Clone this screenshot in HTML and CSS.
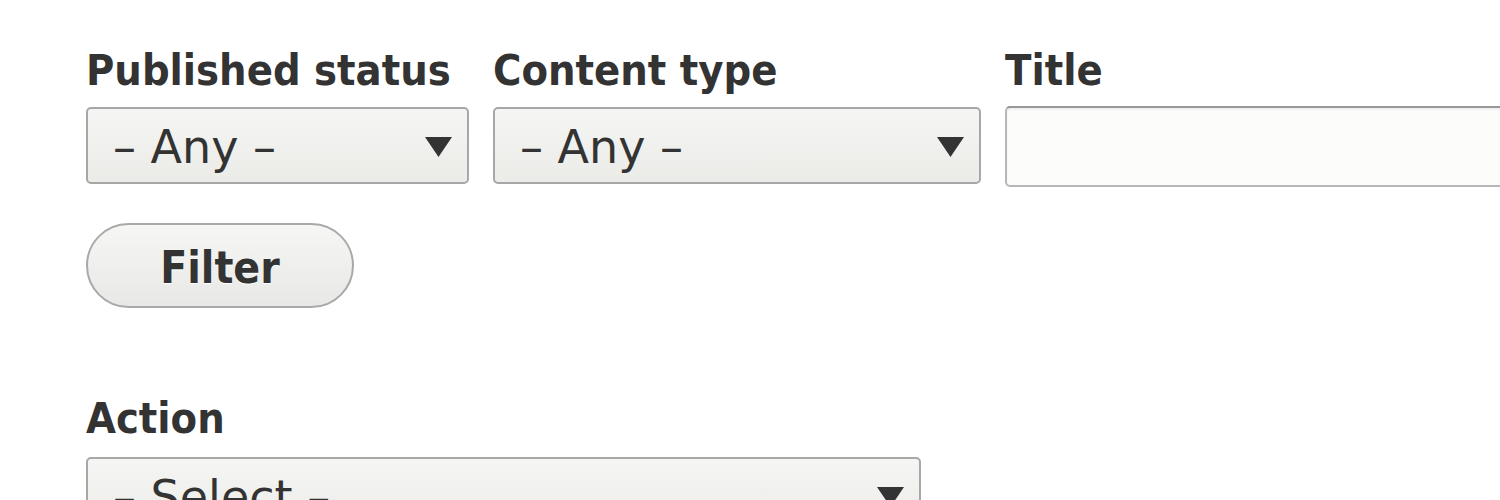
FILE: index.html
```html
<!DOCTYPE html>
<html lang="en">
<head>
<meta charset="utf-8">
<title>Content filter</title>
<link rel="stylesheet" href="styles.css">
</head>
<body>
<form class="page">
  <div class="filters">
    <div class="field">
      <label class="label">Published status</label>
      <div class="select select-status">
        <span class="select-text">– Any –</span>
        <svg class="arrow" viewBox="0 0 27 20" width="27" height="20"><polygon points="0,0 27,0 13.5,20" fill="#333"/></svg>
      </div>
    </div>
    <div class="field">
      <label class="label">Content type</label>
      <div class="select select-type">
        <span class="select-text">– Any –</span>
        <svg class="arrow" viewBox="0 0 27 20" width="27" height="20"><polygon points="0,0 27,0 13.5,20" fill="#333"/></svg>
      </div>
    </div>
    <div class="field">
      <label class="label">Title</label>
      <div class="text-input"></div>
    </div>
  </div>
  <div class="actions">
    <button type="button" class="button">Filter</button>
  </div>
  <div class="field action-field">
    <label class="label">Action</label>
    <div class="select select-action">
      <span class="select-text">– Select –</span>
      <svg class="arrow" viewBox="0 0 27 20" width="27" height="20"><polygon points="0,0 27,0 13.5,20" fill="#333"/></svg>
    </div>
  </div>
</form>
</body>
</html>
```
FILE: styles.css
```css
html, body {
  margin: 0;
  padding: 0;
  background: #ffffff;
  overflow: hidden;
}
body {
  width: 1500px;
  height: 500px;
}
.page {
  padding: 44px 0 0 86px;
  font-family: "DejaVu Sans Condensed", "DejaVu Sans", sans-serif;
  font-stretch: condensed;
  color: #333333;
}
.filters {
  display: flex;
  gap: 24px;
  align-items: flex-start;
  height: 140px;
}
.field {
  display: flex;
  flex-direction: column;
  flex: none;
}
.label {
  display: block;
  font-size: 43px;
  font-weight: bold;
  line-height: 52px;
  height: 52px;
  margin-bottom: 11px;
  white-space: nowrap;
}
.select {
  box-sizing: border-box;
  height: 77px;
  border: 2px solid #a7a7a7;
  border-radius: 5px;
  background: linear-gradient(to bottom, #f5f5f3 0%, #ebebe8 100%);
  display: flex;
  align-items: center;
  justify-content: space-between;
  padding: 0 15px 0 25px;
}
.select-text {
  font-family: "DejaVu Sans", sans-serif;
  font-stretch: normal;
  font-size: 46px;
  line-height: 70px;
  padding-top: 3px;
  white-space: nowrap;
}
.arrow {
  display: block;
  flex: none;
  margin-top: 3px;
}
.select-status { width: 383px; }
.select-type { width: 488px; }
.select-action { width: 835px; }
.text-input {
  box-sizing: border-box;
  width: 560px;
  height: 81px;
  margin-top: -1px;
  border: 2px solid #b7b7b7;
  border-top-color: #979797;
  border-radius: 5px;
  background: #fcfcfa;
  box-shadow: inset 0 2px 2px rgba(0,0,0,0.05);
}
.actions {
  display: flex;
  margin-top: 39px;
}
.button {
  box-sizing: border-box;
  width: 268px;
  height: 85px;
  border: 2px solid #a9a9a9;
  border-radius: 43px;
  background: linear-gradient(to bottom, #f6f6f4 0%, #e8e8e6 100%);
  font-family: "DejaVu Sans Condensed", "DejaVu Sans", sans-serif;
  font-stretch: condensed;
  font-weight: bold;
  font-size: 44px;
  color: #333333;
  padding: 3px 0 0 0;
  text-shadow: 0 1px 0 #ffffff;
}
.action-field {
  margin-top: 84px;
}
.action-field .label {
  margin-bottom: 13px;
}
```
